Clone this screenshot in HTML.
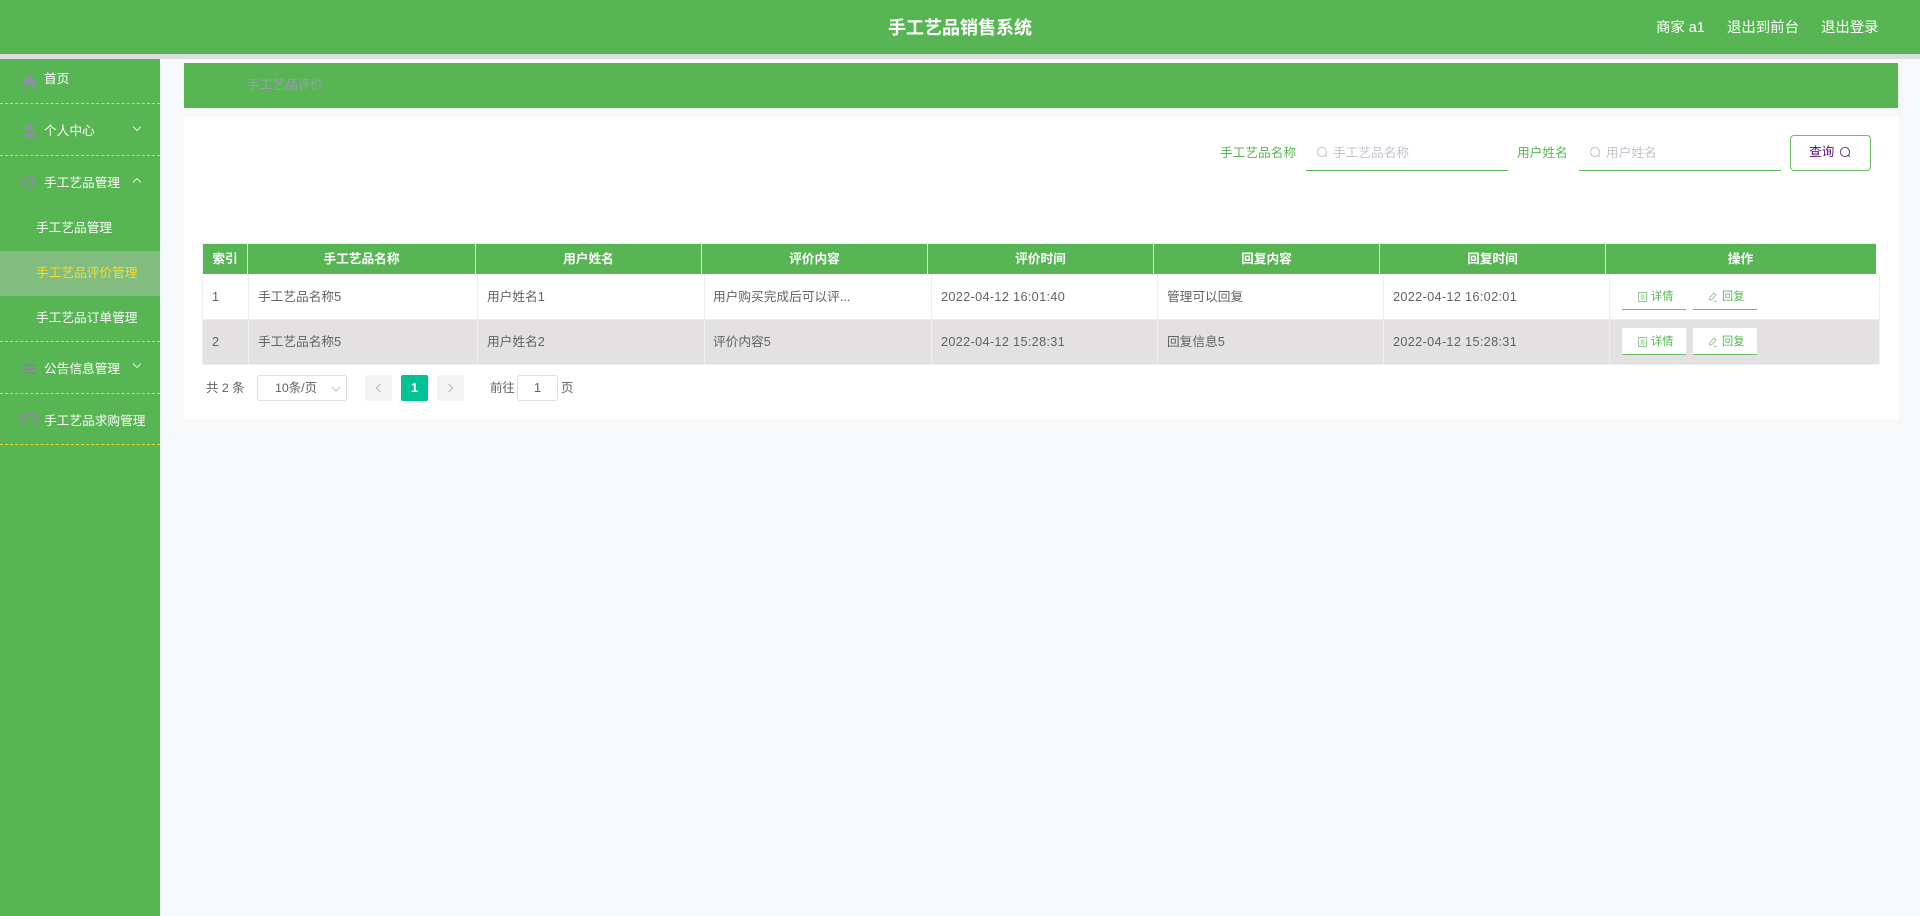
<!DOCTYPE html>
<html lang="zh"><head><meta charset="utf-8"><title>手工艺品销售系统</title>
<style>
*{box-sizing:border-box;margin:0;padding:0}
html,body{width:1920px;height:916px;overflow:hidden;background:#f7f8fa;font-family:"Liberation Sans","Noto Sans CJK SC",sans-serif;font-size:12.7px}
.a{position:absolute;white-space:nowrap}
.t{position:absolute;white-space:nowrap;line-height:20px;height:20px}
.w{color:#fff}
.g{color:#606266}
.d{letter-spacing:.33px}
.h{color:#fff;font-weight:bold;text-align:center}
svg{position:absolute;display:block}
.dash{position:absolute;left:0;width:160px;border-top:1px dashed #f0d91c}
.btn{position:absolute;width:64px;height:27px;border-bottom:1px solid #6bbd67;color:#58b554;font-size:11.2px}
.btn span{position:absolute;top:4px;line-height:20px}
</style></head><body>
<div class="a" style="left:0;top:0;width:1920px;height:54px;background:#58b554"></div>
<div class="a" style="left:0;top:54px;width:1920px;height:5px;background:#dedede"></div>
<div class="t w" style="left:888px;top:18px;font-size:18px;font-weight:bold">手工艺品销售系统</div>
<div class="t w" style="left:1656px;top:18px;font-size:14.4px">商家 a1</div>
<div class="t w" style="left:1727px;top:18px;font-size:14.4px">退出到前台</div>
<div class="t w" style="left:1821px;top:18px;font-size:14.4px">退出登录</div>

<div class="a" style="left:0;top:59px;width:160px;height:857px;background:#58b554"></div>
<div class="a" style="left:0;top:251px;width:160px;height:45px;background:#82bc7e"></div>
<div class="dash" style="top:103px"></div><div class="dash" style="top:155px"></div>
<div class="dash" style="top:341px"></div><div class="dash" style="top:393px"></div><div class="dash" style="top:444px"></div>

<svg style="left:22px;top:74px" width="15" height="14" viewBox="0 0 15 14"><path d="M7.5 1 L14 6.5 L13.5 7.5 V13 H9.5 V9 H5.5 V13 H1.5 V7.5 L1 6.5 Z" fill="#8d90a4"/></svg>
<svg style="left:23px;top:124px" width="13" height="14" viewBox="0 0 13 14"><circle cx="6.5" cy="3.8" r="3.7" fill="#8d90a4"/><rect x="0" y="9" width="13" height="5" rx="2" fill="#8d90a4"/></svg>
<svg style="left:22px;top:175px" width="14" height="14" viewBox="0 0 14 14"><circle cx="7" cy="7" r="6.4" fill="none" stroke="#8d90a4" stroke-width="1.1"/><circle cx="7" cy="7" r="4" fill="none" stroke="#8d90a4" stroke-width="1.1"/></svg>
<svg style="left:23px;top:364px" width="13" height="10" viewBox="0 0 13 10"><path d="M0 1H13M0 5H13M0 9H13" stroke="#8d7fa0" stroke-width="1.8"/></svg>
<svg style="left:22px;top:414px" width="15" height="12" viewBox="0 0 15 12"><rect x=".5" y=".5" width="14" height="11" rx="1" fill="none" stroke="#8d90a4"/><path d="M2 2 L7.5 7 L13 2" fill="none" stroke="#8d90a4"/></svg>

<div class="t w" style="left:44px;top:69px">首页</div>
<div class="t w" style="left:44px;top:121px">个人中心</div>
<div class="t w" style="left:44px;top:173px">手工艺品管理</div>
<div class="t w" style="left:36px;top:218px">手工艺品管理</div>
<div class="t" style="left:36px;top:263px;color:#f4dc2c">手工艺品评价管理</div>
<div class="t w" style="left:36px;top:308px">手工艺品订单管理</div>
<div class="t w" style="left:44px;top:359px">公告信息管理</div>
<div class="t w" style="left:44px;top:411px">手工艺品求购管理</div>
<svg style="left:132px;top:125px" width="10" height="7" viewBox="0 0 10 7"><path d="M1 1.5 L5 5.5 L9 1.5" fill="none" stroke="#e4f0e2" stroke-width="1"/></svg>
<svg style="left:132px;top:177px" width="10" height="7" viewBox="0 0 10 7"><path d="M1 5.5 L5 1.5 L9 5.5" fill="none" stroke="#e4f0e2" stroke-width="1"/></svg>
<svg style="left:132px;top:362px" width="10" height="7" viewBox="0 0 10 7"><path d="M1 1.5 L5 5.5 L9 1.5" fill="none" stroke="#e4f0e2" stroke-width="1"/></svg>

<div class="a" style="left:184px;top:63px;width:1714px;height:45px;background:#58b554"></div>
<div class="t" style="left:247px;top:75px;color:#9a9db4">手工艺品评价</div>
<div class="a" style="left:184px;top:117px;width:1714px;height:302px;background:#fff"></div>

<div class="t" style="left:1220px;top:143px;color:#58b554">手工艺品名称</div>
<div class="a" style="left:1306px;top:170px;width:202px;height:1px;background:#58b554"></div>
<svg style="left:1316px;top:146px" width="13" height="13" viewBox="0 0 13 13"><circle cx="6" cy="6" r="4.6" fill="none" stroke="#c0c4cc"/><path d="M9.4 9.4 L11 11" stroke="#c0c4cc"/></svg>
<div class="t" style="left:1333px;top:143px;color:#c0c4cc">手工艺品名称</div>
<div class="t" style="left:1517px;top:143px;color:#58b554">用户姓名</div>
<div class="a" style="left:1579px;top:170px;width:202px;height:1px;background:#58b554"></div>
<svg style="left:1589px;top:146px" width="13" height="13" viewBox="0 0 13 13"><circle cx="6" cy="6" r="4.6" fill="none" stroke="#c0c4cc"/><path d="M9.4 9.4 L11 11" stroke="#c0c4cc"/></svg>
<div class="t" style="left:1606px;top:143px;color:#c0c4cc">用户姓名</div>
<div class="a" style="left:1790px;top:135px;width:81px;height:36px;border:1px solid #6bbd67;border-radius:4px;background:#fff"></div>
<div class="t" style="left:1809px;top:142px;color:#5b0f7f">查询</div>
<svg style="left:1839px;top:146px" width="13" height="13" viewBox="0 0 13 13"><circle cx="6" cy="6" r="4.6" fill="none" stroke="#6a3a96"/><path d="M9.4 9.4 L11 11" stroke="#6a3a96"/></svg>

<!-- table -->
<div class="a" style="left:202px;top:243px;width:1677px;height:122px;background:#ebeef5"></div>
<div class="a" style="left:203px;top:244px;width:1673px;height:30px;background:#58b554"></div>
<div class="a" style="left:203px;top:274px;width:1676px;height:45px;background:#fff"></div>
<div class="a" style="left:203px;top:320px;width:1676px;height:44px;background:#e3e1e2"></div>
<div class="a" style="left:1876px;top:244px;width:3px;height:30px;background:#fff"></div>
<div class="a" style="left:247px;top:244px;width:1px;height:30px;background:#fff"></div>
<div class="a" style="left:475px;top:244px;width:1px;height:30px;background:#fff"></div>
<div class="a" style="left:701px;top:244px;width:1px;height:30px;background:#fff"></div>
<div class="a" style="left:927px;top:244px;width:1px;height:30px;background:#fff"></div>
<div class="a" style="left:1153px;top:244px;width:1px;height:30px;background:#fff"></div>
<div class="a" style="left:1379px;top:244px;width:1px;height:30px;background:#fff"></div>
<div class="a" style="left:1605px;top:244px;width:1px;height:30px;background:#fff"></div>
<div class="a" style="left:248px;top:274px;width:1px;height:90px;background:#ebeef5"></div>
<div class="a" style="left:477px;top:274px;width:1px;height:90px;background:#ebeef5"></div>
<div class="a" style="left:704px;top:274px;width:1px;height:90px;background:#ebeef5"></div>
<div class="a" style="left:931px;top:274px;width:1px;height:90px;background:#ebeef5"></div>
<div class="a" style="left:1157px;top:274px;width:1px;height:90px;background:#ebeef5"></div>
<div class="a" style="left:1383px;top:274px;width:1px;height:90px;background:#ebeef5"></div>
<div class="a" style="left:1609px;top:274px;width:1px;height:90px;background:#ebeef5"></div>
<div class="a" style="left:1879px;top:274px;width:1px;height:90px;background:#ebeef5"></div>

<div class="t h" style="left:203px;top:249px;width:44px">索引</div>
<div class="t h" style="left:248px;top:249px;width:227px">手工艺品名称</div>
<div class="t h" style="left:476px;top:249px;width:225px">用户姓名</div>
<div class="t h" style="left:702px;top:249px;width:225px">评价内容</div>
<div class="t h" style="left:928px;top:249px;width:225px">评价时间</div>
<div class="t h" style="left:1154px;top:249px;width:225px">回复内容</div>
<div class="t h" style="left:1380px;top:249px;width:225px">回复时间</div>
<div class="t h" style="left:1606px;top:249px;width:269px">操作</div>

<div class="t g" style="left:212px;top:287px">1</div>
<div class="t g" style="left:258px;top:287px">手工艺品名称5</div>
<div class="t g" style="left:487px;top:287px">用户姓名1</div>
<div class="t g" style="left:713px;top:287px">用户购买完成后可以评...</div>
<div class="t g d" style="left:941px;top:287px">2022-04-12 16:01:40</div>
<div class="t g" style="left:1167px;top:287px">管理可以回复</div>
<div class="t g d" style="left:1393px;top:287px">2022-04-12 16:02:01</div>
<div class="t g" style="left:212px;top:332px">2</div>
<div class="t g" style="left:258px;top:332px">手工艺品名称5</div>
<div class="t g" style="left:487px;top:332px">用户姓名2</div>
<div class="t g" style="left:713px;top:332px">评价内容5</div>
<div class="t g d" style="left:941px;top:332px">2022-04-12 15:28:31</div>
<div class="t g" style="left:1167px;top:332px">回复信息5</div>
<div class="t g d" style="left:1393px;top:332px">2022-04-12 15:28:31</div>

<div class="btn" style="left:1622px;top:283px;background:#fff"><svg style="left:16px;top:9px" width="9" height="10" viewBox="0 0 9 10"><path d="M.5.5H8.5V9.5H.5ZM2.5 3H6.5M2.5 5H6.5M2.5 7H6.5" fill="none" stroke="#8fc48c" stroke-width=".9"/></svg><span style="left:29px">详情</span></div>
<div class="btn" style="left:1693px;top:283px;background:#fff"><svg style="left:15px;top:9px" width="10" height="10" viewBox="0 0 10 10"><path d="M1.5 8 L2 5.5 L6 1 L8 3 L3.8 7.6 Z M5.5 9.3H9" fill="none" stroke="#8fc48c" stroke-width=".9"/></svg><span style="left:29px">回复</span></div>
<div class="btn" style="left:1622px;top:328px;background:#fff"><svg style="left:16px;top:9px" width="9" height="10" viewBox="0 0 9 10"><path d="M.5.5H8.5V9.5H.5ZM2.5 3H6.5M2.5 5H6.5M2.5 7H6.5" fill="none" stroke="#8fc48c" stroke-width=".9"/></svg><span style="left:29px">详情</span></div>
<div class="btn" style="left:1693px;top:328px;background:#fff"><svg style="left:15px;top:9px" width="10" height="10" viewBox="0 0 10 10"><path d="M1.5 8 L2 5.5 L6 1 L8 3 L3.8 7.6 Z M5.5 9.3H9" fill="none" stroke="#8fc48c" stroke-width=".9"/></svg><span style="left:29px">回复</span></div>

<!-- pagination -->
<div class="t g" style="left:206px;top:378px;font-size:12.4px">共 2 条</div>
<div class="a" style="left:257px;top:375px;width:90px;height:26px;border:1px solid #dcdfe6;border-radius:3px;background:#fff"></div>
<div class="t g" style="left:275px;top:378px;font-size:12.4px">10条/页</div>
<svg style="left:331px;top:386px" width="10" height="6" viewBox="0 0 10 6"><path d="M1 1 L5 5 L9 1" fill="none" stroke="#c0c4cc"/></svg>
<div class="a" style="left:365px;top:375px;width:27px;height:26px;background:#f4f4f5;border-radius:2px"></div>
<svg style="left:375px;top:383px" width="7" height="10" viewBox="0 0 7 10"><path d="M5.5 1 L1.5 5 L5.5 9" fill="none" stroke="#c0c4cc" stroke-width="1.4"/></svg>
<div class="a" style="left:401px;top:375px;width:27px;height:26px;background:#00c292;border-radius:2px"></div>
<div class="t" style="left:401px;top:378px;width:27px;text-align:center;color:#fff;font-weight:bold;font-size:13px">1</div>
<div class="a" style="left:437px;top:375px;width:27px;height:26px;background:#f4f4f5;border-radius:2px"></div>
<svg style="left:447px;top:383px" width="7" height="10" viewBox="0 0 7 10"><path d="M1.5 1 L5.5 5 L1.5 9" fill="none" stroke="#c0c4cc" stroke-width="1.4"/></svg>
<div class="t g" style="left:490px;top:378px;font-size:12.4px">前往</div>
<div class="a" style="left:517px;top:375px;width:41px;height:26px;border:1px solid #dcdfe6;border-radius:3px;background:#fff"></div>
<div class="t g" style="left:517px;top:378px;width:41px;text-align:center;font-size:13px">1</div>
<div class="t g" style="left:561px;top:378px;font-size:12.4px">页</div>
</body></html>
